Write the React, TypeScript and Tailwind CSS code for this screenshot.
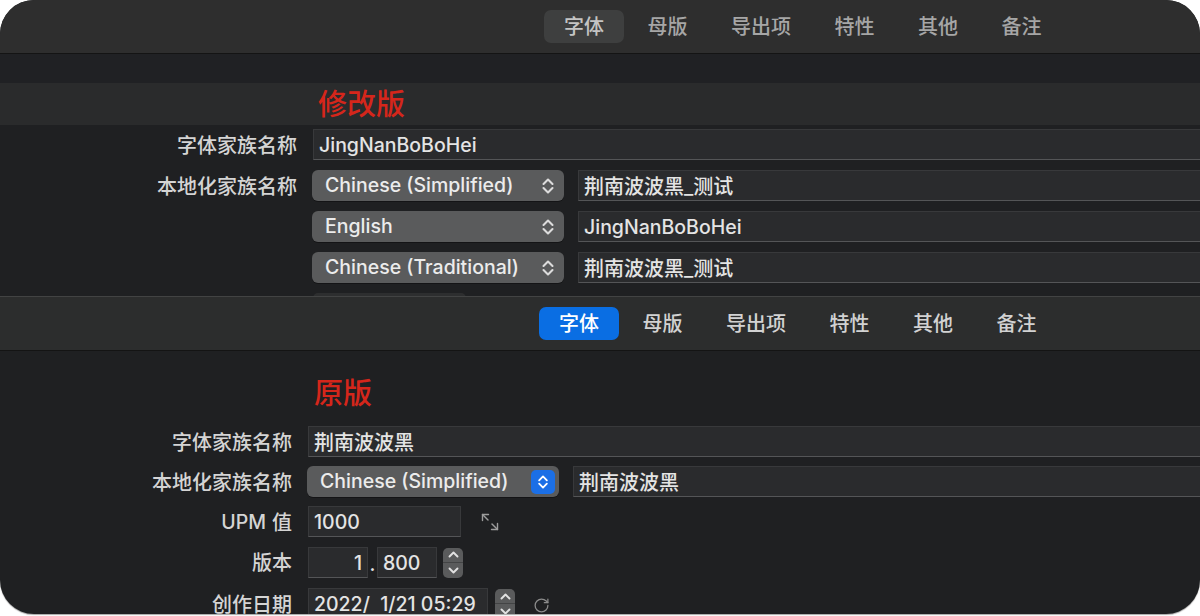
import React from "react";

const tabs = ["字体", "母版", "导出项", "特性", "其他", "备注"];

const Chevrons: React.FC<{ className?: string }> = ({ className }) => (
  <svg width="14" height="18" viewBox="0 0 14 18" className={className} fill="none" stroke="currentColor" strokeWidth="2.1" strokeLinecap="round" strokeLinejoin="round">
    <path d="M2.5 7 7 2.5 11.5 7" />
    <path d="M2.5 11 7 15.5 11.5 11" />
  </svg>
);

const Toolbar: React.FC<{ blue?: boolean }> = ({ blue }) => (
  <div
    className={
      blue
        ? "h-[55px] shrink-0 flex items-center gap-[3.5px] pl-[539px] bg-[#2c2d2d] border-t border-[#424343] border-b border-b-[#141414]"
        : "h-[54px] shrink-0 flex items-center gap-[3.5px] pl-[544px] bg-[#2e2e2e] border-b border-[#141414]"
    }
  >
    {tabs.map((t, i) => (
      <div
        key={t}
        className={
          i === 0
            ? blue
              ? "h-[33px] px-5 rounded-[7px] flex items-center bg-[#0a6ee3] text-white"
              : "h-[33px] px-5 rounded-[7px] flex items-center bg-[#3e3f3f] text-[#c4c4c4]"
            : blue
            ? "h-[33px] px-5 flex items-center text-[#d2d2d2]"
            : "h-[33px] px-5 flex items-center text-[#a6a6a6]"
        }
      >
        <span className="text-[20px] leading-none pt-[1px]">{t}</span>
      </div>
    ))}
  </div>
);

const Label: React.FC<{ children: React.ReactNode }> = ({ children }) => (
  <div className="flex items-center justify-end h-[31px] text-[20px] text-[#d4d4d4] pt-[3px]">{children}</div>
);

const Field: React.FC<{ children?: React.ReactNode; className?: string }> = ({ children, className }) => (
  <div
    className={
      "h-[31px] flex items-center px-[5px] pt-[2px] bg-[#2a2b2d] border border-[#38393b] border-b-[#545557] text-[#e4e4e4] whitespace-nowrap " +
      (className ?? "")
    }
  >
    {children}
  </div>
);

const Popup: React.FC<{ text: string; active?: boolean }> = ({ text, active }) => (
  <div className="w-[252px] h-[31px] shrink-0 rounded-[6px] bg-[#5a5b5c] flex items-center justify-between pl-[13px] pr-[4px] text-[19.5px] text-[#ececec] shadow-[0_1px_0_rgba(0,0,0,0.35)]">
    <span className="pt-[1px]">{text}</span>
    {active ? (
      <span className="w-[24px] h-[24px] rounded-[5px] bg-[#1b6fe6] flex items-center justify-center text-white">
        <Chevrons className="w-[12px] h-[16px]" />
      </span>
    ) : (
      <span className="w-[24px] flex items-center justify-center text-[#dcdcdc]">
        <Chevrons />
      </span>
    )}
  </div>
);

const Stepper: React.FC = () => (
  <div className="w-[20px] h-[30px] rounded-[5px] bg-[#5a5b5c] flex flex-col text-[#e2e2e2] overflow-hidden">
    <div className="flex-1 flex items-center justify-center border-b border-[#434445]">
      <svg width="11" height="7" viewBox="0 0 11 7" fill="none" stroke="currentColor" strokeWidth="1.9" strokeLinecap="round" strokeLinejoin="round">
        <path d="M1.5 5.5 5.5 1.5 9.5 5.5" />
      </svg>
    </div>
    <div className="flex-1 flex items-center justify-center">
      <svg width="11" height="7" viewBox="0 0 11 7" fill="none" stroke="currentColor" strokeWidth="1.9" strokeLinecap="round" strokeLinejoin="round">
        <path d="M1.5 1.5 5.5 5.5 9.5 1.5" />
      </svg>
    </div>
  </div>
);

export default function App() {
  return (
    <div className="w-[1200px] h-[616px] bg-white font-['Inter','Noto_Sans_CJK_SC',sans-serif] font-medium">
      <div className="h-[614px] rounded-[34px] overflow-hidden bg-[#1f2022] flex flex-col shadow-[0_1px_1px_rgba(0,0,0,0.35)]">
        {/* modified version */}
        <div className="h-[296px] shrink-0 overflow-hidden">
          <Toolbar />
          <div className="h-[29px] bg-[#202124]" />
          <div className="h-[42px] bg-[#2a2b2c] flex items-center pl-[318px]">
            <span className="text-[29px] leading-none text-[#d5261b]">修改版</span>
          </div>
          <div className="grid grid-cols-[297px_1fr] gap-x-[15px] gap-y-[10px] pt-[4px]">
            <Label>字体家族名称</Label>
            <Field className="-mr-4 ml-[1px] text-[19.5px]">JingNanBoBoHei</Field>

            <Label>本地化家族名称</Label>
            <div className="flex gap-[14px]">
              <Popup text="Chinese (Simplified)" />
              <Field className="flex-1 -mr-4 text-[20px]">荆南波波黑_测试</Field>
            </div>

            <div />
            <div className="flex gap-[14px]">
              <Popup text="English" />
              <Field className="flex-1 -mr-4 text-[19.5px]">JingNanBoBoHei</Field>
            </div>

            <div />
            <div className="flex gap-[14px]">
              <Popup text="Chinese (Traditional)" />
              <Field className="flex-1 -mr-4 text-[20px]">荆南波波黑_测试</Field>
            </div>

            <div />
            <div className="h-[31px] w-[153px] ml-[1px] rounded-t-[5px] bg-[#2d2e2f]" />
          </div>
        </div>

        {/* original version */}
        <Toolbar blue />
        <div className="flex-1 pt-[22px]">
          <div className="pl-[314px] h-[40px] flex items-center">
            <span className="text-[29px] leading-none text-[#d5261b]">原版</span>
          </div>
          <div className="grid grid-cols-[292px_1fr] gap-x-[16px] gap-y-[9px] mt-[13px]">
            <Label>字体家族名称</Label>
            <Field className="-mr-4 text-[20px]">荆南波波黑</Field>

            <Label>本地化家族名称</Label>
            <div className="flex gap-[14px] -ml-[1px]">
              <Popup text="Chinese (Simplified)" active />
              <Field className="flex-1 -mr-4 text-[20px]">荆南波波黑</Field>
            </div>

            <Label>
              <span className="text-[19.5px]">UPM</span>
              <span className="ml-[6px]">值</span>
            </Label>
            <div className="flex items-center">
              <Field className="w-[153px] text-[19.5px]">1000</Field>
              <svg width="20" height="20" viewBox="0 0 20 20" className="ml-[19px] text-[#9c9c9c]" fill="none" stroke="currentColor" strokeWidth="1.4" strokeLinecap="round" strokeLinejoin="round">
                <path d="M2.5 8.5V2.5H8.5" />
                <path d="M2.5 2.5 8 8" />
                <path d="M17.5 11.5V17.5H11.5" />
                <path d="M17.5 17.5 12 12" />
              </svg>
            </div>

            <Label>版本</Label>
            <div className="flex items-center">
              <Field className="w-[60px] justify-end text-[19.5px]">1</Field>
              <span className="w-[9px] text-center text-[19.5px] text-[#e4e4e4] pt-[4px]">.</span>
              <Field className="w-[60px] text-[19.5px]">800</Field>
              <div className="ml-[6px]">
                <Stepper />
              </div>
            </div>

            <Label>创作日期</Label>
            <div className="flex items-center">
              <Field className="w-[180px] text-[19.5px]">
                <span className="whitespace-pre">{"2022/  1/21 05:29"}</span>
              </Field>
              <div className="ml-[7px]">
                <Stepper />
              </div>
              <svg width="17" height="17" viewBox="0 0 24 24" className="ml-[18px] mt-[4px] text-[#8c8c8c]" fill="none" stroke="currentColor" strokeWidth="1.8" strokeLinecap="round" strokeLinejoin="round">
                <path d="M21 12a9 9 0 1 1-9-9c2.52 0 4.93 1 6.74 2.74L21 8" />
                <path d="M21 3v5h-5" />
              </svg>
            </div>
          </div>
        </div>
      </div>
    </div>
  );
}
